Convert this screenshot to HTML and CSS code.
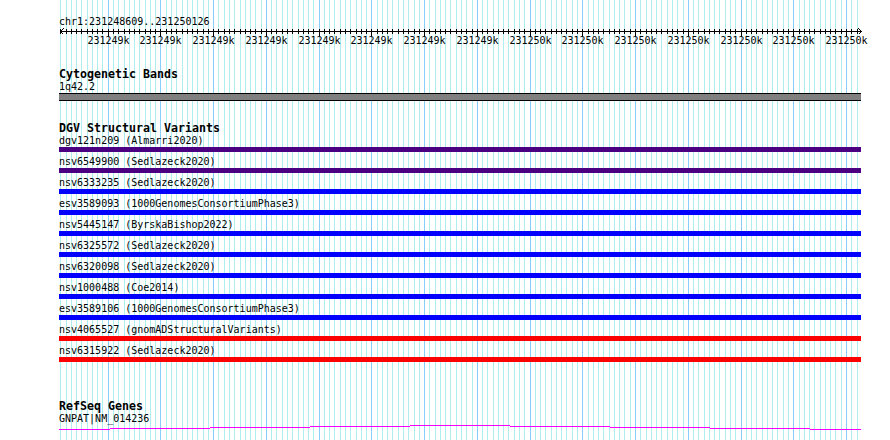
FILE: index.html
```html
<!DOCTYPE html>
<html lang="en">
<head>
<meta charset="utf-8">
<title>chr1:231248609..231250126</title>
<link rel="stylesheet" href="styles.css">
</head>
<body>
<div class="page">
  <svg class="grid" id="grid" width="890" height="440" shape-rendering="crispEdges"></svg>
  <div class="tracks">
    <div class="locus">chr1:231248609..231250126</div>
    <svg class="ruler" id="ruler" width="803" height="18" shape-rendering="crispEdges">
      <rect class="ruler-line" x="1" y="4" width="801" height="1"></rect>
      <path class="ruler-arrow" d="M4.5 1.5 L1.5 4.5 L4.5 7.5"></path>
      <path class="ruler-arrow" d="M799.5 1.5 L802.5 4.5 L799.5 7.5"></path>
    </svg>

    <section class="track track-cyto">
      <div class="track-title">Cytogenetic Bands</div>
      <div class="feature-label">1q42.2</div>
      <div class="band"></div>
    </section>

    <section class="track track-dgv">
      <div class="track-title">DGV Structural Variants</div>
      <div class="variant-list">
        <div class="variant"><div class="feature-label">dgv121n209 (Almarri2020)</div><div class="bar bar-purple"></div></div>
        <div class="variant"><div class="feature-label">nsv6549900 (Sedlazeck2020)</div><div class="bar bar-purple"></div></div>
        <div class="variant"><div class="feature-label">nsv6333235 (Sedlazeck2020)</div><div class="bar bar-blue"></div></div>
        <div class="variant"><div class="feature-label">esv3589093 (1000GenomesConsortiumPhase3)</div><div class="bar bar-blue"></div></div>
        <div class="variant"><div class="feature-label">nsv5445147 (ByrskaBishop2022)</div><div class="bar bar-blue"></div></div>
        <div class="variant"><div class="feature-label">nsv6325572 (Sedlazeck2020)</div><div class="bar bar-blue"></div></div>
        <div class="variant"><div class="feature-label">nsv6320098 (Sedlazeck2020)</div><div class="bar bar-blue"></div></div>
        <div class="variant"><div class="feature-label">nsv1000488 (Coe2014)</div><div class="bar bar-blue"></div></div>
        <div class="variant"><div class="feature-label">esv3589106 (1000GenomesConsortiumPhase3)</div><div class="bar bar-blue"></div></div>
        <div class="variant"><div class="feature-label">nsv4065527 (gnomADStructuralVariants)</div><div class="bar bar-red"></div></div>
        <div class="variant"><div class="feature-label">nsv6315922 (Sedlazeck2020)</div><div class="bar bar-red"></div></div>
      </div>
    </section>

    <section class="track track-refseq">
      <div class="track-title">RefSeq Genes</div>
      <div class="feature-label gene-label">GNPAT|NM_014236</div>
      <svg class="gene" width="803" height="8" shape-rendering="crispEdges">
        <rect class="gene-seg" x="0" y="5" width="51" height="1"></rect>
        <rect class="gene-seg" x="51" y="4" width="100" height="1"></rect>
        <rect class="gene-seg" x="151" y="3" width="100" height="1"></rect>
        <rect class="gene-seg" x="251" y="2" width="100" height="1"></rect>
        <rect class="gene-seg" x="351" y="1" width="100" height="1"></rect>
        <rect class="gene-seg" x="451" y="2" width="100" height="1"></rect>
        <rect class="gene-seg" x="551" y="3" width="100" height="1"></rect>
        <rect class="gene-seg" x="651" y="4" width="100" height="1"></rect>
        <rect class="gene-seg" x="751" y="5" width="51" height="1"></rect>
      </svg>
    </section>
  </div>
</div>
<script src="script.js"></script>
</body>
</html>
```

FILE: styles.css
```css
html, body {
  margin: 0;
  padding: 0;
  background: #ffffff;
}

.page {
  position: relative;
  width: 890px;
  height: 440px;
  overflow: hidden;
  background: #ffffff;
  color: #000000;
  font-family: "DejaVu Sans Mono", "Liberation Mono", monospace;
}

.grid {
  position: absolute;
  left: 0;
  top: 0;
}

.grid-minor { fill: #afeeee; }
.grid-major { fill: #87cefa; }

.tracks {
  position: relative;
  padding: 16px 0 0 59px;
}

.locus,
.feature-label {
  font-size: 10px;
  line-height: 11px;
  height: 11px;
  white-space: pre;
}

.ruler {
  display: block;
  overflow: visible;
}

.ruler-line,
.ruler-tick { fill: #000000; }

.ruler-arrow {
  fill: none;
  stroke: #000000;
  stroke-width: 1;
}

.scale-label {
  font-family: "DejaVu Sans Mono", "Liberation Mono", monospace;
  font-size: 10px;
  fill: #000000;
}

.track-title {
  font-size: 11.63px;
  font-weight: bold;
  line-height: 12px;
  height: 12px;
  white-space: pre;
}

.track-cyto { margin-top: 23px; }
.track-cyto .feature-label { margin-top: 1px; }

.band {
  margin-top: 1px;
  width: 802px;
  height: 6px;
  border-top: 1px solid #000000;
  border-bottom: 1px solid #000000;
  background: #808080;
}

.track-dgv { margin-top: 21px; }

.variant-list { margin-top: 1px; }

.variant {
  height: 21px;
}

.bar {
  margin-top: 1px;
  width: 802px;
  height: 5px;
}

.bar-purple { background: #4b0082; }
.bar-blue { background: #0000ff; }
.bar-red { background: #ff0000; }

.track-refseq { margin-top: 34px; }
.gene-label { margin-top: 1px; }

.gene {
  display: block;
}

.gene-seg { fill: #ff00ff; }
```

FILE: script.js
```js
(function () {
  var NS = "http://www.w3.org/2000/svg";
  var start = 231248609, end = 231250126;
  var x0 = 59.7, scale = 800 / 1517;
  var rulerLeft = 59;
  var grid = document.getElementById("grid");
  var ruler = document.getElementById("ruler");

  function px(bp) { return Math.round(x0 + (bp - start) * scale); }

  function rect(parent, cls, x, y, w, h) {
    var r = document.createElementNS(NS, "rect");
    r.setAttribute("class", cls);
    r.setAttribute("x", x);
    r.setAttribute("y", y);
    r.setAttribute("width", w);
    r.setAttribute("height", h);
    parent.appendChild(r);
    return r;
  }

  for (var bp = 231248610; bp <= end; bp += 10) {
    var x = px(bp);
    var major = bp % 100 === 0;
    rect(grid, major ? "grid-major" : "grid-minor", x, 0, 1, 440);
    rect(ruler, "ruler-tick", x - rulerLeft, 2, 1, major ? 7 : 5);
    if (major) {
      var t = document.createElementNS(NS, "text");
      t.setAttribute("class", "scale-label");
      t.setAttribute("x", x - rulerLeft + 0.5);
      t.setAttribute("y", 17);
      t.setAttribute("text-anchor", "middle");
      t.textContent = Math.round(bp / 1000) + "k";
      ruler.appendChild(t);
    }
  }
})();
```
